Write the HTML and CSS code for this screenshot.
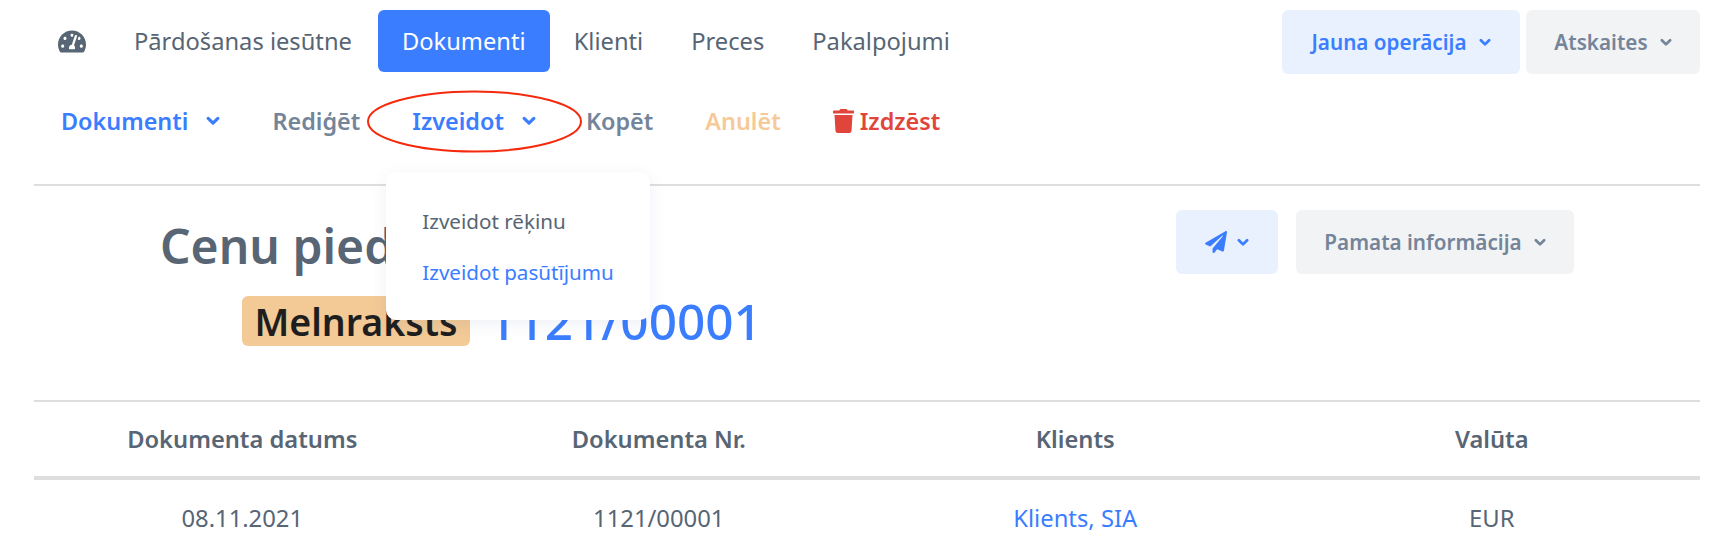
FILE: index.html
```html
<!DOCTYPE html>
<html lang="lv">
<head>
  <meta charset="UTF-8">
  <meta name="viewport" content="width=device-width, initial-scale=1.0">
  <title>Cenu piedāvājums</title>
  <link rel="stylesheet" href="styles.css">
</head>
<body>
  <svg class="defs" width="0" height="0">
    <symbol id="chev" viewBox="0 0 16 11">
      <path d="M2.5 2.5 8 8l5.5-5.5" fill="none" stroke="currentColor" stroke-width="3.6" stroke-linecap="round" stroke-linejoin="round"/>
    </symbol>
  </svg>

  <div class="page">
    <!-- galvenā izvēlne -->
    <header class="topbar">
      <nav class="main-nav">
        <a class="nav-icon">
          <svg viewBox="0 0 576 512" width="28" height="25"><path fill="currentColor" d="M288 32C128.94 32 0 160.94 0 320c0 52.8 14.25 102.26 39.06 144.8 5.61 9.62 16.3 15.2 27.44 15.2h443c11.14 0 21.83-5.58 27.44-15.2C561.75 422.26 576 372.8 576 320c0-159.06-128.94-288-288-288zm0 64c14.71 0 26.58 10.13 30.32 23.65-1.11 2.26-2.64 4.23-3.45 6.67l-9.22 27.67c-5.13 3.49-10.97 6.01-17.64 6.01-17.67 0-32-14.33-32-32S270.33 96 288 96zM96 384c-17.67 0-32-14.33-32-32s14.33-32 32-32 32 14.33 32 32-14.33 32-32 32zm48-160c-17.67 0-32-14.33-32-32s14.33-32 32-32 32 14.33 32 32-14.33 32-32 32zm246.77-72.41l-61.33 184C343.13 347.33 352 364.54 352 384c0 11.72-3.38 22.55-8.88 32H232.88c-5.5-9.45-8.88-20.28-8.88-32 0-33.94 26.5-61.43 59.9-63.59l61.34-184.01c4.17-12.56 17.73-19.45 30.36-15.17 12.57 4.19 19.35 17.79 15.17 30.36zm14.66 57.2l15.52-46.55c3.47-1.29 7.13-2.23 11.05-2.23 17.67 0 32 14.33 32 32s-14.33 32-32 32c-11.38-.01-20.89-6.28-26.57-15.22zM480 384c-17.67 0-32-14.33-32-32s14.33-32 32-32 32 14.33 32 32-14.33 32-32 32z"/></svg>
        </a>
        <a class="nav-item">Pārdošanas iesūtne</a>
        <a class="nav-item active">Dokumenti</a>
        <a class="nav-item">Klienti</a>
        <a class="nav-item">Preces</a>
        <a class="nav-item">Pakalpojumi</a>
      </nav>
      <div class="top-actions">
        <button class="btn btn-blue btn-new">Jauna operācija <svg class="chev"><use href="#chev"/></svg></button>
        <button class="btn btn-grey btn-reports">Atskaites <svg class="chev"><use href="#chev"/></svg></button>
      </div>
    </header>

    <!-- dokumenta darbības -->
    <div class="toolbar">
      <a class="tool blue">Dokumenti <svg class="chev"><use href="#chev"/></svg></a>
      <a class="tool grey">Rediģēt</a>
      <div class="tool-wrap">
        <a class="tool blue">Izveidot <svg class="chev"><use href="#chev"/></svg></a>
        <svg class="ring" width="215" height="63" viewBox="0 0 215 63"><ellipse cx="107.5" cy="31.5" rx="106.5" ry="30" fill="none" stroke="#f5290c" stroke-width="2"/></svg>
        <div class="dropdown">
          <a class="drop-item">Izveidot rēķinu</a>
          <a class="drop-item blue">Izveidot pasūtījumu</a>
        </div>
      </div>
      <a class="tool grey">Kopēt</a>
      <a class="tool peach">Anulēt</a>
      <a class="tool red">
        <svg class="trash" viewBox="0 0 448 512" width="21" height="24"><path fill="currentColor" d="M432 32H312l-9.4-18.7A24 24 0 0 0 281.1 0H166.8a23.72 23.72 0 0 0-21.4 13.3L136 32H16A16 16 0 0 0 0 48v32a16 16 0 0 0 16 16h416a16 16 0 0 0 16-16V48a16 16 0 0 0-16-16zM53.2 467a48 48 0 0 0 47.9 45h245.8a48 48 0 0 0 47.9-45L416 128H32z"/></svg>
        Izdzēst
      </a>
    </div>

    <section class="doc-head">
      <div class="doc-title">
        <h1>Cenu piedāvājums</h1>
        <div class="doc-status">
          <span class="badge">Melnraksts</span>
          <span class="doc-number">1121/00001</span>
        </div>
      </div>
      <div class="doc-actions">
        <button class="btn btn-blue btn-send">
          <svg viewBox="0 0 512 512" width="22" height="22"><path fill="currentColor" d="M476 3.2L12.5 270.6c-18.1 10.4-15.8 35.6 2.2 43.2L121 358.4l287.3-253.2c5.5-4.9 13.3 2.6 8.6 8.3L176 407v80.5c0 23.6 28.5 32.9 42.5 15.8L282 426l124.6 52.2c14.2 6 30.4-2.9 33-18.2l72-432C515 7.8 493.3-6.8 476 3.2z"/></svg>
          <svg class="chev"><use href="#chev"/></svg>
        </button>
        <button class="btn btn-grey btn-info">Pamata informācija <svg class="chev"><use href="#chev"/></svg></button>
      </div>
    </section>

    <table class="doc-table">
      <thead>
        <tr>
          <th>Dokumenta datums</th>
          <th>Dokumenta Nr.</th>
          <th>Klients</th>
          <th>Valūta</th>
        </tr>
      </thead>
      <tbody>
        <tr>
          <td>08.11.2021</td>
          <td>1121/00001</td>
          <td><a class="blue">Klients, SIA</a></td>
          <td>EUR</td>
        </tr>
      </tbody>
    </table>
  </div>
</body>
</html>
```

FILE: styles.css
```css
body {
  margin: 0;
  background-color: #fff;
  color: #576574;
  font-family: "Noto Sans", "Open Sans", sans-serif;
  overflow: hidden;
}
.defs {
  display: block;
  height: 0;
}
.page {
  padding: 10px 10px 0 34px;
}
.blue {
  color: #3b7dff;
}
.chev {
  width: 12px;
  height: 9px;
  flex: none;
}

/* top bar */
.topbar {
  display: flex;
  justify-content: space-between;
  align-items: flex-start;
}
.main-nav {
  display: flex;
  align-items: center;
  height: 62px;
}
.nav-icon {
  display: flex;
  padding: 0 24px;
  color: #576574;
}
.nav-item {
  padding: 0 24px;
  height: 62px;
  line-height: 62px;
  font-size: 23.7px;
  border-radius: 6px;
  white-space: nowrap;
}
.nav-item.active {
  margin-left: 2px;
  background-color: #3b7dff;
  color: #fff;
}
.top-actions {
  display: flex;
  gap: 6px;
}
.btn {
  display: flex;
  align-items: center;
  justify-content: center;
  height: 64px;
  border: none;
  border-radius: 6px;
  font-family: inherit;
  font-size: 20.7px;
  font-weight: 600;
  cursor: pointer;
}
.btn-blue {
  background-color: #e9f1fe;
  color: #3b7dff;
}
.btn-grey {
  background-color: #f1f3f5;
  color: #748499;
}
.btn .chev {
  margin-left: 12px;
}
.btn-new {
  width: 238px;
}
.btn-reports {
  width: 174px;
}

/* toolbar */
.toolbar {
  display: flex;
  align-items: center;
  padding: 31px 0 47px 1px;
  border-bottom: 2px solid #dedede;
}
.tool {
  display: flex;
  align-items: center;
  padding: 0 26px;
  font-size: 23.4px;
  line-height: 32px;
  font-weight: 600;
  white-space: nowrap;
}
.tool .chev {
  width: 14px;
  height: 10px;
  margin-left: 18px;
}
.tool.grey {
  color: #748499;
}
.tool.peach {
  color: #f5ca98;
}
.tool.red {
  color: #e1443a;
}
.trash {
  margin-right: 6px;
}
.tool-wrap {
  position: relative;
  margin-right: -2px;
}
.ring {
  position: absolute;
  left: -19px;
  top: -15px;
  pointer-events: none;
}
.dropdown {
  position: absolute;
  left: 0;
  top: 67px;
  z-index: 5;
  width: 264px;
  height: 148px;
  box-sizing: border-box;
  padding-top: 24px;
  background-color: #fff;
  border-radius: 10px;
  box-shadow: 0 4px 16px rgba(60, 90, 160, 0.09);
}
.drop-item {
  display: block;
  padding: 0 36px;
  height: 51px;
  line-height: 50px;
  font-size: 20.6px;
  white-space: nowrap;
}

/* document head */
.doc-head {
  display: flex;
  justify-content: space-between;
  height: 216px;
  box-sizing: border-box;
  padding: 23px 126px 0 126px;
  border-bottom: 2px solid #dedede;
}
h1 {
  margin: 0;
  font-size: 48px;
  line-height: 74px;
  font-weight: 600;
  white-space: nowrap;
}
.doc-status {
  display: flex;
  align-items: center;
  gap: 18px;
  margin: 13px 0 0 82px;
}
.badge {
  display: flex;
  align-items: center;
  justify-content: center;
  width: 228px;
  height: 50px;
  border-radius: 6px;
  background-color: #f3c995;
  color: #1e1e1e;
  font-size: 37.5px;
  font-weight: 600;
}
.doc-number {
  color: #3b7dff;
  font-size: 49.5px;
  font-weight: 500;
  line-height: 50px;
}
.doc-actions {
  display: flex;
  gap: 18px;
  margin-top: 1px;
}
.btn-send {
  width: 102px;
}
.btn-send .chev {
  margin-left: 10px;
}
.btn-info {
  width: 278px;
}

/* table */
.doc-table {
  width: 100%;
  table-layout: fixed;
  border-collapse: collapse;
  text-align: center;
}
.doc-table th {
  height: 74px;
  padding: 0;
  font-size: 23.7px;
  font-weight: 600;
  border-bottom: 4px solid #dedede;
}
.doc-table td {
  height: 76px;
  padding: 0;
  font-size: 23.8px;
}
```
